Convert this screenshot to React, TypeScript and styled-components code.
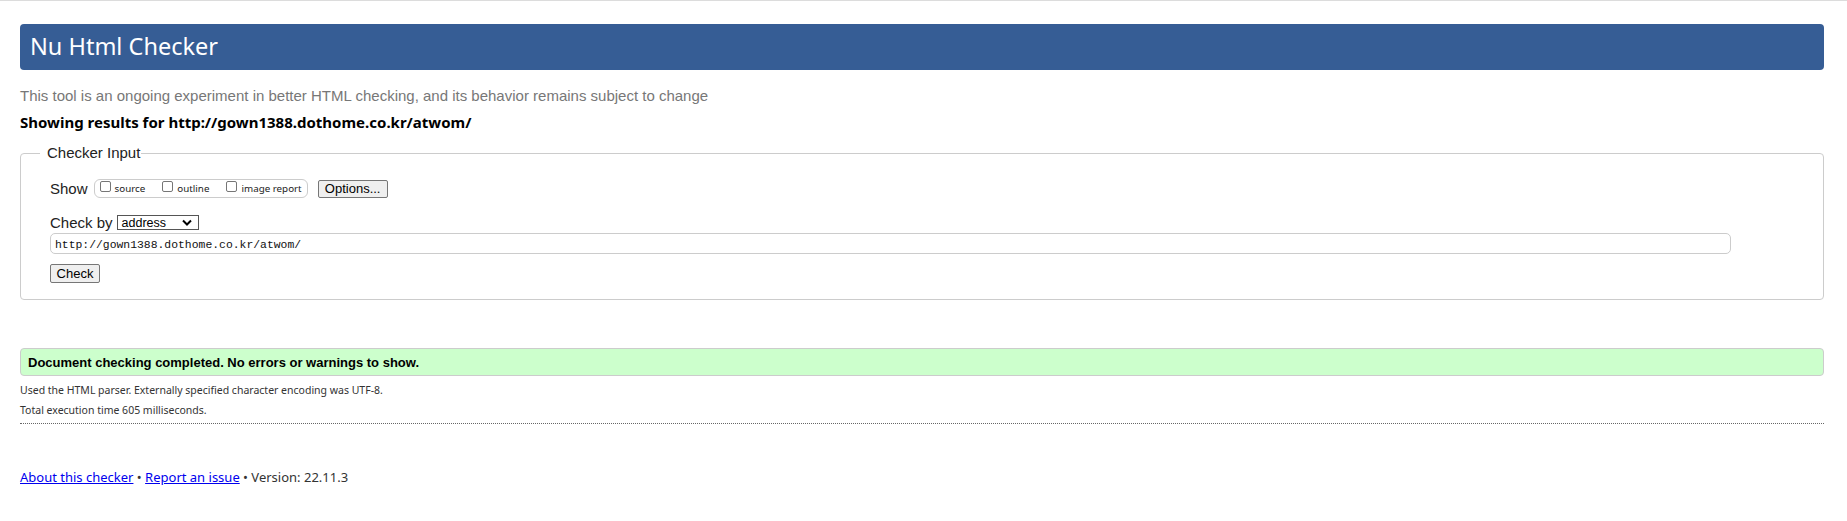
import React from "react";
import styled, { createGlobalStyle } from "styled-components";

const Global = createGlobalStyle`
  html, body { margin: 0; padding: 0; background: #fff; }
  body { font-family: "Noto Sans", sans-serif; color: #000; }
`;

const Page = styled.div`
  border-top: 1px solid #dcdcdc;
  padding: 0 23px 40px 20px;
`;

const Header = styled.h1`
  margin: 23px 0 0;
  height: 46px;
  box-sizing: border-box;
  padding: 0 10px;
  display: flex;
  align-items: center;
  background: #365d95;
  color: #fff;
  border-radius: 4px;
  font-family: "Noto Sans", sans-serif;
  font-weight: 400;
  font-size: 23.5px;
  line-height: 1;
`;

const Intro = styled.p`
  margin: 16px 0 0;
  font-family: "Liberation Sans", Arial, sans-serif;
  font-size: 15px;
  line-height: 20px;
  color: #777;
`;

const Results = styled.p`
  margin: 5px 0 0;
  font-family: "Noto Sans", sans-serif;
  font-weight: 700;
  font-size: 15px;
  line-height: 22px;
`;

const Fieldset = styled.fieldset`
  margin: 10px 0 0;
  padding: 16px 30px 16px 29px;
  border: 1px solid #ccc;
  border-radius: 4px;
  min-width: 0;
`;

const Legend = styled.legend`
  margin-left: -10px;
  padding: 0 1px 0 7px;
  font-family: "Liberation Sans", Arial, sans-serif;
  font-size: 15px;
  line-height: 20px;
  color: #222;
`;

const Row = styled.div<{ $mt?: number }>`
  display: flex;
  align-items: center;
  margin-top: ${(p) => p.$mt ?? 0}px;
`;

const Label = styled.span`
  margin-right: 5px;
  font-family: "Liberation Sans", Arial, sans-serif;
  font-size: 15px;
  line-height: 19px;
  color: #222;
`;

const Group = styled.span`
  display: inline-flex;
  height: 19px;
  box-sizing: border-box;
  border: 1px solid #ccc;
  border-radius: 6px;
  padding: 0 5px;
  margin-left: 1px;
  gap: 17px;
`;

const Check = styled.label`
  display: inline-flex;
  align-items: baseline;
  gap: 4px;
  font-family: "Noto Sans", sans-serif;
  font-size: 9.8px;
  line-height: 17px;
  color: #222;
`;

const Box = styled.span`
  display: inline-block;
  width: 11px;
  height: 11px;
  box-sizing: border-box;
  border: 1px solid #767676;
  border-radius: 2px;
  background: #fff;
  margin-bottom: 1px;
`;

const Button = styled.button<{ $w: number }>`
  width: ${(p) => p.$w}px;
  height: 19px;
  margin: 0;
  padding: 0;
  border: 1px solid #767676;
  border-radius: 2px;
  background: #efefef;
  font-family: "Liberation Sans", Arial, sans-serif;
  font-size: 13px;
  color: #000;
`;

const OptionsButton = styled(Button)`
  height: 18px;
  margin-left: 10px;
`;

const Select = styled.span`
  display: inline-flex;
  align-items: center;
  justify-content: space-between;
  width: 82px;
  height: 15px;
  box-sizing: border-box;
  border: 1px solid #555;
  padding: 0 6px 0 4px;
  font-family: "Liberation Sans", Arial, sans-serif;
  font-size: 12.5px;
  background: #fff;
  margin-left: -1px;
`;

const UrlInput = styled.div`
  margin-top: 1px;
  margin-right: 62px;
  height: 21px;
  box-sizing: border-box;
  border: 1px solid #ccc;
  border-radius: 5px;
  padding: 2px 4px 0;
  display: flex;
  align-items: center;
  font-family: "Liberation Mono", monospace;
  font-size: 11.4px;
  color: #111;
`;

const Success = styled.div`
  margin-top: 48px;
  height: 28px;
  box-sizing: border-box;
  border: 1px solid #ccc;
  border-radius: 4px;
  background: #ccffcc;
  padding: 0 7px;
  display: flex;
  align-items: center;
  font-family: "Liberation Sans", Arial, sans-serif;
  font-weight: 700;
  font-size: 13px;
`;

const Meta = styled.p<{ $first?: boolean }>`
  margin: ${(p) => (p.$first ? "4px" : "0")} 0 0;
  font-family: "Noto Sans", sans-serif;
  font-size: 10.5px;
  line-height: 20px;
  color: #333;
`;

const Rule = styled.hr`
  margin: 3px 0 0;
  border: 0;
  border-top: 1px dotted #666;
`;

const Footer = styled.p`
  margin: 43px 0 0;
  font-family: "Noto Sans", sans-serif;
  font-size: 13px;
  line-height: 20px;
  color: #333;
`;

const Link = styled.a`
  color: #0000ee;
  text-decoration: underline;
`;

const Chevron = () => (
  <svg width="10" height="7" viewBox="0 0 10 7">
    <path d="M1 1.5 L5 5.5 L9 1.5" fill="none" stroke="#000" strokeWidth="2" />
  </svg>
);

export default function App() {
  return (
    <>
      <Global />
      <Page>
        <Header>Nu Html Checker</Header>
        <Intro>
          This tool is an ongoing experiment in better HTML checking, and its behavior remains
          subject to change
        </Intro>
        <Results>Showing results for http://gown1388.dothome.co.kr/atwom/</Results>
        <Fieldset>
          <Legend>Checker Input</Legend>
          <Row>
            <Label>Show</Label>
            <Group>
              <Check>
                <Box />
                source
              </Check>
              <Check>
                <Box />
                outline
              </Check>
              <Check>
                <Box />
                image report
              </Check>
            </Group>
            <OptionsButton $w={70}>Options...</OptionsButton>
          </Row>
          <Row $mt={15}>
            <Label>Check by</Label>
            <Select>
              address
              <Chevron />
            </Select>
          </Row>
          <UrlInput>http://gown1388.dothome.co.kr/atwom/</UrlInput>
          <Row $mt={10}>
            <Button $w={50}>Check</Button>
          </Row>
        </Fieldset>
        <Success>Document checking completed. No errors or warnings to show.</Success>
        <Meta $first>Used the HTML parser. Externally specified character encoding was UTF-8.</Meta>
        <Meta>Total execution time 605 milliseconds.</Meta>
        <Rule />
        <Footer>
          <Link href="#">About this checker</Link> • <Link href="#">Report an issue</Link> •
          Version: 22.11.3
        </Footer>
      </Page>
    </>
  );
}
